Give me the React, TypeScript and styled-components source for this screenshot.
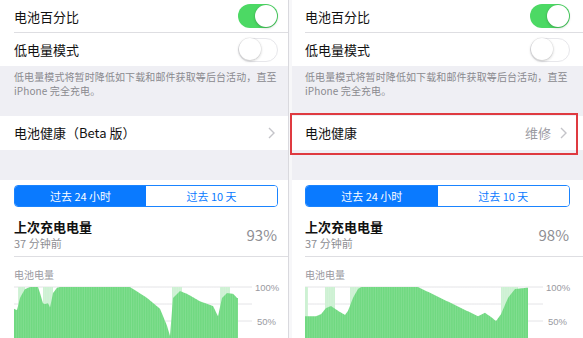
import React from "react";
import styled, { createGlobalStyle } from "styled-components";

const GlobalStyle = createGlobalStyle`
  html, body { margin: 0; padding: 0; background: #fff; }
  body {
    font-family: "Noto Sans CJK SC", "Noto Sans", sans-serif;
    -webkit-font-smoothing: antialiased;
  }
`;

const Page = styled.div`
  display: flex;
  width: 583px;
  height: 338px;
  overflow: hidden;
`;

const Panel = styled.div<{ $w: number; $pl: number; $pr: number }>`
  --pl: ${(p) => p.$pl}px;
  --pr: ${(p) => p.$pr}px;
  width: ${(p) => p.$w}px;
  flex: none;
  display: flex;
  flex-direction: column;
  background: #efeff4;
`;

const Divider = styled.div`
  width: 4px;
  flex: none;
  box-sizing: border-box;
  background: #f7f7f9;
  border-left: 1px solid #d9d9de;
`;

const Group = styled.div`
  background: #fff;
`;

const Row = styled.div<{ $h: number; $marked?: boolean }>`
  position: relative;
  display: flex;
  align-items: center;
  height: ${(p) => p.$h}px;
  padding: 0 var(--pr) 0 var(--pl);
  font-size: 13px;
  color: #111;
  background: #fff;

  ${(p) =>
    p.$marked &&
    `
    &::after {
      content: "";
      position: absolute;
      left: -2px;
      right: 5px;
      top: -3px;
      bottom: -5px;
      border: 2px solid #df3a40;
      z-index: 2;
    }
  `}
`;

const Separator = styled.div`
  height: 1px;
  margin-left: var(--pl);
  background: #dedee2;
`;

const Toggle = styled.span<{ $on?: boolean }>`
  position: relative;
  margin-left: auto;
  width: 40px;
  height: 24px;
  border-radius: 12px;
  box-sizing: border-box;
  background: ${(p) => (p.$on ? "#4cd964" : "#fff")};
  border: ${(p) => (p.$on ? "none" : "1.5px solid #e7e7eb")};

  &::after {
    content: "";
    position: absolute;
    top: ${(p) => (p.$on ? "1px" : "0")};
    ${(p) => (p.$on ? "right: 1px;" : "left: 0;")}
    width: 22px;
    height: 22px;
    margin: ${(p) => (p.$on ? "0" : "-0.5px")};
    border-radius: 50%;
    background: #fff;
    box-shadow: 0 1px 3px rgba(0, 0, 0, 0.22), 0 0 0 0.5px rgba(0, 0, 0, 0.06);
  }
`;

const Footer = styled.div`
  height: 51px;
  box-sizing: border-box;
  padding: 4px var(--pr) 0 var(--pl);
  font-size: 10px;
  line-height: 14px;
  color: #8a8a8f;
  white-space: nowrap;
  letter-spacing: 0.1px;
`;

const Detail = styled.span`
  margin-left: auto;
  color: #9a9a9f;
  font-size: 13px;
`;

const Chevron = styled.svg<{ $solo?: boolean }>`
  margin-left: ${(p) => (p.$solo ? "auto" : "9px")};
  margin-right: 3px;
  flex: none;
`;

const Spacer = styled.div`
  height: 31px;
`;

const Card = styled.div`
  flex: 1;
  background: #fff;
  padding-top: 5px;
`;

const Segmented = styled.div`
  display: grid;
  grid-template-columns: 1fr 1fr;
  height: 22px;
  margin: 0 var(--pr) 0 var(--pl);
  box-sizing: border-box;
  border: 1px solid #1a84ff;
  border-radius: 4px;
  overflow: hidden;
`;

const Segment = styled.div<{ $active?: boolean }>`
  display: flex;
  align-items: center;
  justify-content: center;
  font-size: 11px;
  background: ${(p) => (p.$active ? "#0a7aff" : "#fff")};
  color: ${(p) => (p.$active ? "#fff" : "#0a7aff")};
`;

const ChargeBlock = styled.div`
  display: flex;
  align-items: center;
  justify-content: space-between;
  padding: 10px var(--pr) 5px var(--pl);
`;

const ChargeTitle = styled.div`
  font-size: 13px;
  line-height: 19px;
  font-weight: 700;
  color: #111;
`;

const ChargeSub = styled.div`
  font-size: 11px;
  line-height: 15px;
  color: #8e8e93;
`;

const Percent = styled.div`
  font-size: 15px;
  color: #8e8e93;
  margin-right: 1px;
`;

const ChartTitle = styled.div`
  padding: 13px 0 0 var(--pl);
  font-size: 10px;
  line-height: 10px;
  color: #9a9a9f;
`;

const ChartSvg = styled.svg`
  display: block;
  margin-left: var(--pl);
  font-family: "Liberation Sans", sans-serif;
`;

type Pt = [number, number];

const TOP = 6;
const SCALE = 0.68;
const yOf = (pct: number) => TOP + (100 - pct) * SCALE;

const level = (pts: Pt[], x: number) => {
  if (x <= pts[0][0]) return pts[0][1];
  for (let i = 1; i < pts.length; i++) {
    const [x1, y1] = pts[i];
    const [x0, y0] = pts[i - 1];
    if (x <= x1) return y0 + ((y1 - y0) * (x - x0)) / (x1 - x0);
  }
  return pts[pts.length - 1][1];
};

const BatteryChart = ({
  points,
  bands,
  end,
  gridEnd,
  labelX,
}: {
  points: Pt[];
  bands: [number, number][];
  end: number;
  gridEnd: number;
  labelX: number;
}) => {
  // outline of the level, stepped every 1px
  let d = `M0 62`;
  for (let x = 0; x <= end; x += 1) d += ` L${x} ${yOf(level(points, x)).toFixed(2)}`;
  d += ` L${end} 62 Z`;

  const ticks: React.ReactNode[] = [];
  for (let x = 2.35; x < end; x += 2.35) {
    ticks.push(<line key={x} x1={x} x2={x} y1={TOP} y2={62} stroke="#ffffff" strokeOpacity={0.22} strokeWidth={0.6} />);
  }

  return (
    <ChartSvg width={270} height={58} viewBox="0 -1 270 58">
      {[100, 75, 50].map((p) => (
        <line key={p} x1={0} x2={gridEnd} y1={yOf(p)} y2={yOf(p)} stroke="#e4e4e7" strokeWidth={1} />
      ))}
      {bands.map(([a, b]) => (
        <rect key={a} x={a} y={TOP} width={b - a} height={60} fill="#cdf1d3" />
      ))}
      <path d={d} fill="#70d981" />
      {ticks}
      <text x={labelX} y={yOf(100) + 3.5} fontSize={9.5} fill="#9a9a9f">100%</text>
      <text x={labelX + 2} y={yOf(50) + 3.5} fontSize={9.5} fill="#9a9a9f">50%</text>
    </ChartSvg>
  );
};

const Chevron7 = ({ solo }: { solo?: boolean }) => (
  <Chevron $solo={solo} width="7" height="12" viewBox="0 0 7 12">
    <path d="M1 1l5 5-5 5" fill="none" stroke="#c4c4c9" strokeWidth="1.4" />
  </Chevron>
);

const leftPts: Pt[] = [
  [0, 68], [3, 66], [6, 84], [11, 97], [16, 100], [24, 100], [26, 91], [29, 76],
  [31, 75], [34, 76], [36, 70], [39, 91], [43, 99], [46, 100], [116, 100],
  [133, 84], [146, 68], [153, 43], [156, 28], [159, 84], [166, 94], [173, 90],
  [186, 79], [199, 72], [204, 57], [208, 84], [213, 91], [219, 90], [223, 84],
];

const rightPts: Pt[] = [
  [0, 57], [11, 57], [16, 60], [21, 69], [26, 72], [33, 65], [40, 59], [43, 65],
  [48, 84], [53, 97], [56, 100], [113, 100], [173, 57], [180, 62], [185, 57],
  [191, 50], [196, 60], [203, 84], [210, 97], [222, 99],
];

const BatteryScreen = ({
  w,
  pl,
  pr,
  health,
  marked,
  pct,
  pts,
  bands,
  end,
}: {
  w: number;
  pl: number;
  pr: number;
  health: string;
  marked?: boolean;
  pct: string;
  pts: Pt[];
  bands: [number, number][];
  end: number;
}) => (
  <Panel $w={w} $pl={pl} $pr={pr}>
    <Group>
      <Row $h={32}>
        电池百分比
        <Toggle $on />
      </Row>
      <Separator />
      <Row $h={33}>
        低电量模式
        <Toggle />
      </Row>
    </Group>
    <Footer>
      低电量模式将暂时降低如下载和邮件获取等后台活动，直至
      <br />
      iPhone 完全充电。
    </Footer>
    <Row $h={34} $marked={marked}>
      {health}
      {marked ? (
        <>
          <Detail>维修</Detail>
          <Chevron7 />
        </>
      ) : (
        <Chevron7 solo />
      )}
    </Row>
    <Spacer />
    <Card>
      <Segmented>
        <Segment $active>过去 24 小时</Segment>
        <Segment>过去 10 天</Segment>
      </Segmented>
      <ChargeBlock>
        <div>
          <ChargeTitle>上次充电电量</ChargeTitle>
          <ChargeSub>37 分钟前</ChargeSub>
        </div>
        <Percent>{pct}</Percent>
      </ChargeBlock>
      <Separator />
      <ChartTitle>电池电量</ChartTitle>
      <BatteryChart points={pts} bands={bands} end={end} gridEnd={238} labelX={241} />
    </Card>
  </Panel>
);

export default function App() {
  return (
    <>
      <GlobalStyle />
      <Page>
        <BatteryScreen
          w={288}
          pl={14}
          pr={10}
          health="电池健康（Beta 版）"
          pct="93%"
          pts={leftPts}
          bands={[[4, 11], [29, 39], [158, 168], [206, 216]]}
          end={224}
        />
        <Divider />
        <BatteryScreen
          w={291}
          pl={13}
          pr={13}
          health="电池健康"
          marked
          pct="98%"
          pts={rightPts}
          bands={[[0, 3], [20, 30], [45, 55], [196, 213]]}
          end={223}
        />
      </Page>
    </>
  );
}
